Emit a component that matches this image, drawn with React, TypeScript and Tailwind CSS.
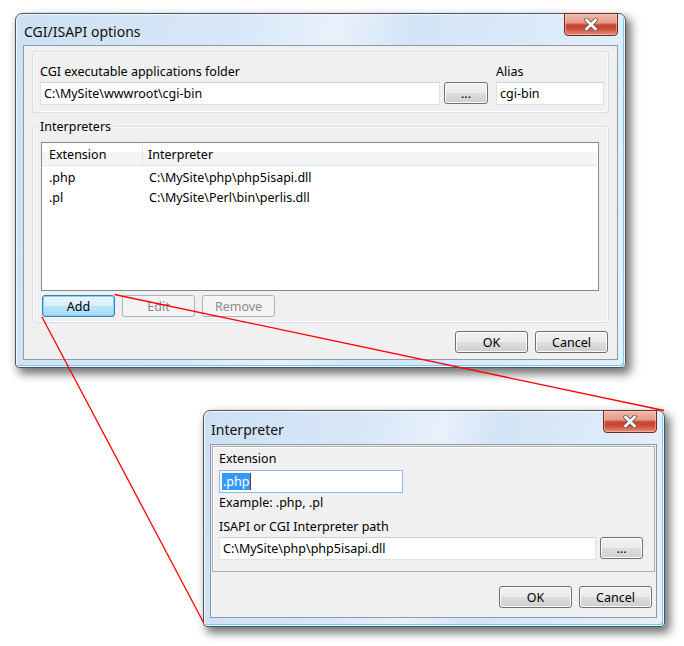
import type { ReactNode } from "react";

const FONT = "font-['Noto_Sans','Open_Sans',sans-serif]";

function CloseButton() {
  return (
    <div className="absolute right-[7px] top-[-1px] h-[23px] w-[54px] rounded-b-[4px] border border-[#6e2b22] bg-[linear-gradient(to_bottom,#f0b9ad_0%,#e39a8a_42%,#c8442f_52%,#c94b36_70%,#e6907e_100%)] shadow-[inset_0_0_0_1px_rgba(255,220,210,0.45)] flex items-center justify-center">
      <svg width="14" height="13" viewBox="0 0 14 13">
        <path d="M2.5 2 L11.5 11 M11.5 2 L2.5 11" stroke="#6a5a5a" strokeWidth="4.4" strokeLinecap="square" />
        <path d="M2.5 2 L11.5 11 M11.5 2 L2.5 11" stroke="#ffffff" strokeWidth="2.6" strokeLinecap="square" />
      </svg>
    </div>
  );
}

function Button({
  children,
  w = "w-[73px]",
  kind = "normal",
}: {
  children: ReactNode;
  w?: string;
  kind?: "normal" | "hot" | "disabled";
}) {
  const look =
    kind === "hot"
      ? "border-[#3c7fb1] bg-[linear-gradient(to_bottom,#eaf6fd_0%,#d9f0fc_48%,#bee6fd_52%,#a7d9f5_100%)] shadow-[inset_0_0_0_1px_#7fd2f8] text-black"
      : kind === "disabled"
      ? "border-[#adb2b5] bg-[#f4f4f4] text-[#8a8a8a]"
      : "border-[#707070] bg-[linear-gradient(to_bottom,#f2f2f2_0%,#ebebeb_48%,#dddddd_52%,#cfcfcf_100%)] shadow-[inset_0_0_0_1px_#fcfcfc] text-black";
  return (
    <div className={`h-[22px] ${w} shrink-0 rounded-[3px] border ${look} pt-[2px] flex items-center justify-center text-[12.5px] leading-none`}>
      {children}
    </div>
  );
}

function TextBox({ w, children }: { w: string; children?: ReactNode }) {
  return (
    <div className={`h-[23px] ${w} shrink-0 border border-[#dfe3e8] border-t-[#cdd3da] bg-white pl-[3px] pt-[1px] flex items-center text-[12.5px]`}>
      {children}
    </div>
  );
}

function Window({
  className,
  children,
}: {
  className: string;
  children: ReactNode;
}) {
  return (
    <div
      className={`absolute ${className} rounded-t-[7px] rounded-b-[4px] border border-[#4a5562] bg-[linear-gradient(100deg,#cde0f4_0%,#d9e8f8_35%,#e8f1fb_48%,#d3e4f6_60%,#dcebf9_80%,#e6f0fa_100%)] shadow-[4px_5px_10px_1px_rgba(0,0,0,0.55),inset_0_0_0_1px_#f3f8fd,inset_-2px_-2px_0_0_#6fcdf2] flex flex-col`}
    >
      <CloseButton />
      {children}
    </div>
  );
}

export default function App() {
  return (
    <div className={`relative h-[646px] w-[684px] overflow-hidden bg-white text-black ${FONT}`}>
      {/* main options dialog */}
      <Window className="left-[15px] top-[13px] h-[355px] w-[611px]">
        <div className="h-[31px] pl-[8px] pt-[3px] flex items-center text-[14px] text-[#101010]">
          CGI/ISAPI options
        </div>
        <div className="mx-[7px] h-[315px] border border-[#8c9aa9] bg-[#f0f0f0] flex flex-col">
          <div className="mx-[8px] mt-[5px] h-[62px] rounded-[3px] border border-[#d5dfe5] shadow-[inset_0_0_0_1px_#fbfbfb] pl-[7px] pt-[11px] flex gap-[8px]">
            <div className="flex flex-col">
              <div className="h-[16px] pt-[1px] text-[12.5px] leading-[16px]">CGI executable applications folder</div>
              <div className="mt-[3px] flex gap-[4px]">
                <TextBox w="w-[400px]">C:\MySite\wwwroot\cgi-bin</TextBox>
                <Button w="w-[44px]">...</Button>
              </div>
            </div>
            <div className="flex flex-col">
              <div className="h-[16px] pt-[1px] text-[12.5px] leading-[16px]">Alias</div>
              <div className="mt-[3px]">
                <TextBox w="w-[108px]">cgi-bin</TextBox>
              </div>
            </div>
          </div>

          <div className="relative mx-[8px] mt-[13px] h-[197px] rounded-[3px] border border-[#d5dfe5] shadow-[inset_0_0_0_1px_#fbfbfb] pl-[8px] pt-[15px] flex flex-col">
            <div className="absolute left-[5px] top-[-8px] bg-[#f0f0f0] px-[2px] text-[12.5px] leading-[16px]">
              Interpreters
            </div>
            <div className="h-[149px] w-[558px] border border-[#828790] bg-white flex flex-col text-[12.5px]">
              <div className="flex h-[23px] w-[555px] border-b border-[#e3e3ee] bg-[linear-gradient(to_bottom,#ffffff_0%,#ffffff_42%,#f4f5f7_43%,#f4f5f7_100%)]">
                <div className="w-[101px] border-r border-[#e2e4e8] pl-[7px] pt-[3px] flex items-center">Extension</div>
                <div className="pl-[5px] pt-[3px] flex items-center">Interpreter</div>
              </div>
              <div className="mt-[2px] flex h-[20px] items-center">
                <div className="w-[101px] pl-[7px]">.php</div>
                <div className="pl-[6px]">C:\MySite\php\php5isapi.dll</div>
              </div>
              <div className="flex h-[20px] items-center">
                <div className="w-[101px] pl-[7px]">.pl</div>
                <div className="pl-[6px]">C:\MySite\Perl\bin\perlis.dll</div>
              </div>
            </div>
            <div className="ml-[1px] mt-[4px] flex gap-[7px]">
              <Button kind="hot">Add</Button>
              <Button kind="disabled">Edit</Button>
              <Button kind="disabled">Remove</Button>
            </div>
          </div>

          <div className="mt-[8px] pr-[9px] flex justify-end gap-[7px]">
            <Button>OK</Button>
            <Button>Cancel</Button>
          </div>
        </div>
      </Window>

      {/* interpreter dialog */}
      <Window className="left-[203px] top-[410px] h-[217px] w-[462px]">
        <div className="h-[33px] pl-[7px] pt-[3px] flex items-center text-[14px] text-[#101010]">
          Interpreter
        </div>
        <div className="ml-[6px] mr-[7px] h-[174px] border border-[#8c9aa9] bg-[#f0f0f0] flex flex-col">
          <div className="mx-[1px] mt-[1px] h-[126px] border border-[#a9adb2] shadow-[inset_1px_1px_0_0_#ffffff] pl-[6px] pt-[4px] flex flex-col text-[12.5px]">
            <div className="h-[16px] leading-[16px]">Extension</div>
            <div className="mt-[3px] h-[23px] w-[184px] border border-[#8fb8e2] bg-white pl-[2px] flex items-center">
              <span className="flex h-[17px] items-center bg-[#3399ff] px-[1px] pt-[1px] text-white">.php</span>
              <span className="h-[17px] w-[1px] bg-[#a0282a]" />
            </div>
            <div className="mt-[2px] h-[16px] leading-[16px]">Example: .php, .pl</div>
            <div className="mt-[8px] h-[16px] leading-[16px]">ISAPI or CGI Interpreter path</div>
            <div className="mt-[2px] flex gap-[4px]">
              <TextBox w="w-[377px]">C:\MySite\php\php5isapi.dll</TextBox>
              <Button w="w-[43px]">...</Button>
            </div>
          </div>
          <div className="mt-[14px] pr-[4px] flex justify-end gap-[7px]">
            <Button>OK</Button>
            <Button>Cancel</Button>
          </div>
        </div>
      </Window>

      {/* callout lines */}
      <svg className="pointer-events-none absolute inset-0" width="684" height="646" viewBox="0 0 684 646">
        <line x1="114.5" y1="294.5" x2="664" y2="410.5" stroke="#ff0000" strokeWidth="1.3" />
        <line x1="42" y1="317" x2="203.5" y2="622.5" stroke="#ff0000" strokeWidth="1.3" />
      </svg>
    </div>
  );
}
